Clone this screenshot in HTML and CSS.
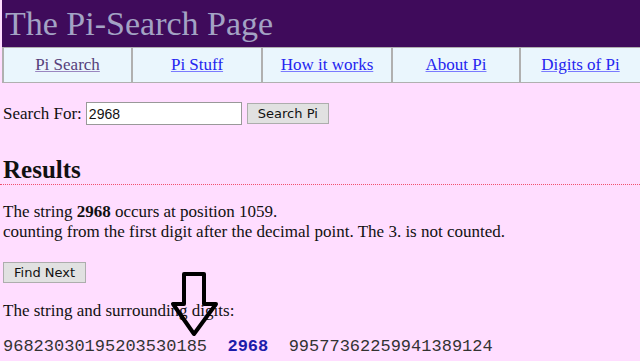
FILE: index.html
```html
<!DOCTYPE html>
<html lang="en">
<head>
    <meta charset="UTF-8">
    <title>The Pi-Search Page</title>
    <link rel="stylesheet" href="styles.css">
</head>
<body>
    <div class="title">The Pi-Search Page</div>
    <nav class="menu">
        <a class="visited" href="#">Pi Search</a>
        <a href="#">Pi Stuff</a>
        <a href="#">How it works</a>
        <a href="#">About Pi</a>
        <a href="#">Digits of Pi</a>
    </nav>

    <div class="content">
        <form class="search">
            <label for="query">Search For:</label>
            <input id="query" class="query" type="text" value="2968">
            <button type="button" class="btn">Search Pi</button>
        </form>

        <h2 class="results">Results</h2>

        <p class="found">The string <b>2968</b> occurs at position 1059.<br>
        counting from the first digit after the decimal point. The 3. is not counted.</p>

        <button type="button" class="btn">Find Next</button>

        <p class="around">The string and surrounding digits:</p>
        <div class="digits">96823030195203530185  <b>2968</b>  99577362259941389124</div>

        <!-- big pointer arrow drawn over the text -->
        <svg class="arrow" width="54" height="72" viewBox="0 0 54 72">
            <polygon points="16,5 36,5 36,35 48,35 26,65 5,35 16,35" fill="none" stroke="#000" stroke-width="4" stroke-linejoin="round"/>
        </svg>
    </div>
</body>
</html>
```

FILE: styles.css
```css
body {
    margin: 0;
    background: #ffddff;
    font-family: "Liberation Serif", "Times New Roman", serif;
    font-size: 17px;
    color: #111;
}

.title {
    margin-left: 2px;
    height: 47px;
    line-height: 47px;
    padding-left: 3px;
    background: #3f0b5b;
    color: #a3a3c4;
    font-size: 34px;
    white-space: nowrap;
}

.menu {
    display: grid;
    grid-template-columns: 129px 130px 130px 128px 1fr;
    margin-left: 2px;
    height: 36px;
    background: #eaf6fd;
    border-top: 1px solid #b0b0b0;
    border-bottom: 1px solid #b0b0b0;
    box-sizing: border-box;
}

.menu a {
    display: flex;
    align-items: center;
    justify-content: center;
    border-left: 2px solid #b0b0b0;
    color: #2424f0;
    text-decoration-color: #7a7aff;
}

.menu a.visited {
    color: #56407a;
    text-decoration-color: #9a86c0;
}

.content {
    position: relative;
    padding: 19px 3px 0;
}

.search {
    display: flex;
    align-items: center;
    margin: 0;
}

.query {
    width: 156px;
    height: 23px;
    box-sizing: border-box;
    margin: 0 5px 0 4px;
    padding: 1px 2px;
    border: 1px solid #999;
    background: #fff;
    font-family: "Liberation Sans", Arial, sans-serif;
    font-size: 14px;
    color: #111;
}

.btn {
    height: 21px;
    padding: 0 10px;
    background: #e1e1e1;
    border: 1px solid #adadad;
    font-family: "DejaVu Sans", "Liberation Sans", sans-serif;
    font-size: 13px;
    color: #111;
}

.results {
    margin: 30px -3px 0;
    padding: 0 3px;
    font-size: 25px;
    line-height: 29px;
    border-bottom: 1px dotted #f0506e;
}

.found {
    margin: 17px 0 20px;
    line-height: 20px;
}

.around {
    margin: 18px 0 16px;
    line-height: 20px;
}

.digits {
    white-space: pre;
    font-family: "Liberation Mono", "Courier New", monospace;
    font-size: 17px;
    color: #333;
}

.digits b {
    color: #1c1cab;
}

.arrow {
    position: absolute;
    left: 168px;
    top: 186px;
}
```
